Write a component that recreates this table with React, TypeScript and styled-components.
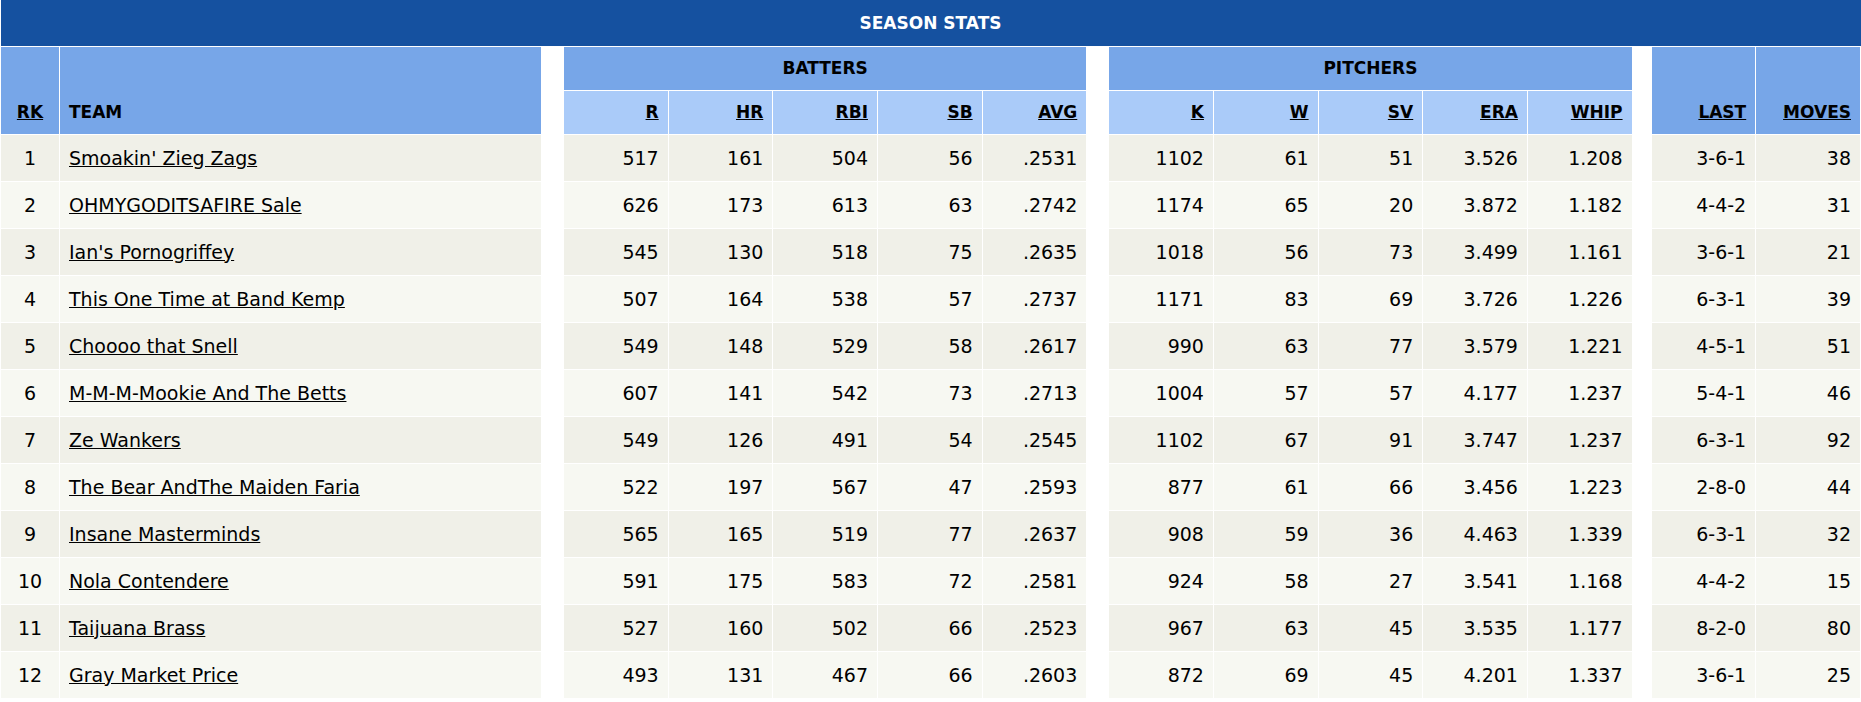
import React from 'react';
import styled, { createGlobalStyle } from 'styled-components';

export const RootGlobalStyle = createGlobalStyle`
  body {
    margin: 0;
    padding: 0;
    background: #ffffff;
    font-family: 'DejaVu Sans', Verdana, sans-serif;
  }
`;

type Team = {
  rank: number;
  name: string;
  batters: string[];
  pitchers: string[];
  last: string;
  moves: string;
};

const teams: Team[] = [
  { rank: 1, name: "Smoakin' Zieg Zags", batters: ['517', '161', '504', '56', '.2531'], pitchers: ['1102', '61', '51', '3.526', '1.208'], last: '3-6-1', moves: '38' },
  { rank: 2, name: 'OHMYGODITSAFIRE Sale', batters: ['626', '173', '613', '63', '.2742'], pitchers: ['1174', '65', '20', '3.872', '1.182'], last: '4-4-2', moves: '31' },
  { rank: 3, name: "Ian's Pornogriffey", batters: ['545', '130', '518', '75', '.2635'], pitchers: ['1018', '56', '73', '3.499', '1.161'], last: '3-6-1', moves: '21' },
  { rank: 4, name: 'This One Time at Band Kemp', batters: ['507', '164', '538', '57', '.2737'], pitchers: ['1171', '83', '69', '3.726', '1.226'], last: '6-3-1', moves: '39' },
  { rank: 5, name: 'Choooo that Snell', batters: ['549', '148', '529', '58', '.2617'], pitchers: ['990', '63', '77', '3.579', '1.221'], last: '4-5-1', moves: '51' },
  { rank: 6, name: 'M-M-M-Mookie And The Betts', batters: ['607', '141', '542', '73', '.2713'], pitchers: ['1004', '57', '57', '4.177', '1.237'], last: '5-4-1', moves: '46' },
  { rank: 7, name: 'Ze Wankers', batters: ['549', '126', '491', '54', '.2545'], pitchers: ['1102', '67', '91', '3.747', '1.237'], last: '6-3-1', moves: '92' },
  { rank: 8, name: 'The Bear AndThe Maiden Faria', batters: ['522', '197', '567', '47', '.2593'], pitchers: ['877', '61', '66', '3.456', '1.223'], last: '2-8-0', moves: '44' },
  { rank: 9, name: 'Insane Masterminds', batters: ['565', '165', '519', '77', '.2637'], pitchers: ['908', '59', '36', '4.463', '1.339'], last: '6-3-1', moves: '32' },
  { rank: 10, name: 'Nola Contendere', batters: ['591', '175', '583', '72', '.2581'], pitchers: ['924', '58', '27', '3.541', '1.168'], last: '4-4-2', moves: '15' },
  { rank: 11, name: 'Taijuana Brass', batters: ['527', '160', '502', '66', '.2523'], pitchers: ['967', '63', '45', '3.535', '1.177'], last: '8-2-0', moves: '80' },
  { rank: 12, name: 'Gray Market Price', batters: ['493', '131', '467', '66', '.2603'], pitchers: ['872', '69', '45', '4.201', '1.337'], last: '3-6-1', moves: '25' },
];

const batterCols = ['R', 'HR', 'RBI', 'SB', 'AVG'];
const pitcherCols = ['K', 'W', 'SV', 'ERA', 'WHIP'];

const Table = styled.table`
  width: 100%;
  table-layout: fixed;
  border-collapse: collapse;
  color: #000;
`;

const Col = styled.col<{ $w?: number }>`
  width: ${(p) => (p.$w ? `${p.$w}px` : 'auto')};
`;

const TitleRow = styled.tr`
  height: 46px;
`;

const Title = styled.th`
  background: #1551a0;
  color: #ffffff;
  font-size: 17px;
  font-weight: bold;
  text-align: center;
  border-bottom: 1px solid #ffffff;
  padding: 0;
`;

const HeadRow = styled.tr`
  height: 44px;
`;

const HeadCell = styled.th<{ $sub?: boolean; $align?: 'left' | 'center' | 'right' }>`
  background: ${(p) => (p.$sub ? '#aacbf9' : '#77a6e8')};
  font-size: 17px;
  font-weight: bold;
  text-align: ${(p) => p.$align || 'right'};
  vertical-align: ${(p) => (p.$sub ? 'middle' : 'bottom')};
  border: 1px solid #ffffff;
  padding: 0 9px;
  padding-bottom: ${(p) => (p.$sub ? '0' : '12px')};
  white-space: nowrap;
`;

const GroupCell = styled(HeadCell)`
  text-align: center;
  vertical-align: middle;
  padding-bottom: 0;
`;

const SortLink = styled.a`
  color: #000;
  text-decoration: underline;
  cursor: pointer;
`;

const Spacer = styled.td`
  background: #ffffff;
  border: none;
  padding: 0;
`;

const BodyRow = styled.tr<{ $odd: boolean }>`
  height: 47px;
  background: ${(p) => (p.$odd ? '#f0f0e8' : '#f7f8f2')};
`;

const Cell = styled.td<{ $align?: 'left' | 'center' | 'right' }>`
  font-size: 19px;
  text-align: ${(p) => p.$align || 'right'};
  vertical-align: middle;
  border: 1px solid #ffffff;
  padding: 0 9px;
  white-space: nowrap;
  overflow: hidden;
`;

const TeamLink = styled.a`
  color: #000;
  text-decoration: underline;
`;

const App = () => {
  return (
    <>
      <RootGlobalStyle />
      <Table>
        <colgroup>
          <Col $w={59} />
          <Col $w={482} />
          <Col $w={22} />
          {batterCols.map((c) => (
            <Col key={c} />
          ))}
          <Col $w={22} />
          {pitcherCols.map((c) => (
            <Col key={c} />
          ))}
          <Col $w={19} />
          <Col />
          <Col />
        </colgroup>
        <thead>
          <TitleRow>
            <Title colSpan={17}>SEASON STATS</Title>
          </TitleRow>
          <HeadRow>
            <HeadCell rowSpan={2} $align="center">
              <SortLink>RK</SortLink>
            </HeadCell>
            <HeadCell rowSpan={2} $align="left">
              TEAM
            </HeadCell>
            <Spacer rowSpan={2} />
            <GroupCell colSpan={5}>BATTERS</GroupCell>
            <Spacer rowSpan={2} />
            <GroupCell colSpan={5}>PITCHERS</GroupCell>
            <Spacer rowSpan={2} />
            <HeadCell rowSpan={2}>
              <SortLink>LAST</SortLink>
            </HeadCell>
            <HeadCell rowSpan={2}>
              <SortLink>MOVES</SortLink>
            </HeadCell>
          </HeadRow>
          <HeadRow>
            {batterCols.map((c) => (
              <HeadCell key={c} $sub>
                <SortLink>{c}</SortLink>
              </HeadCell>
            ))}
            {pitcherCols.map((c) => (
              <HeadCell key={c} $sub>
                <SortLink>{c}</SortLink>
              </HeadCell>
            ))}
          </HeadRow>
        </thead>
        <tbody>
          {teams.map((team) => (
            <BodyRow key={team.rank} $odd={team.rank % 2 === 1}>
              <Cell $align="center">{team.rank}</Cell>
              <Cell $align="left">
                <TeamLink>{team.name}</TeamLink>
              </Cell>
              <Spacer />
              {team.batters.map((v, i) => (
                <Cell key={'b' + i}>{v}</Cell>
              ))}
              <Spacer />
              {team.pitchers.map((v, i) => (
                <Cell key={'p' + i}>{v}</Cell>
              ))}
              <Spacer />
              <Cell>{team.last}</Cell>
              <Cell>{team.moves}</Cell>
            </BodyRow>
          ))}
        </tbody>
      </Table>
    </>
  );
};

export default App;
